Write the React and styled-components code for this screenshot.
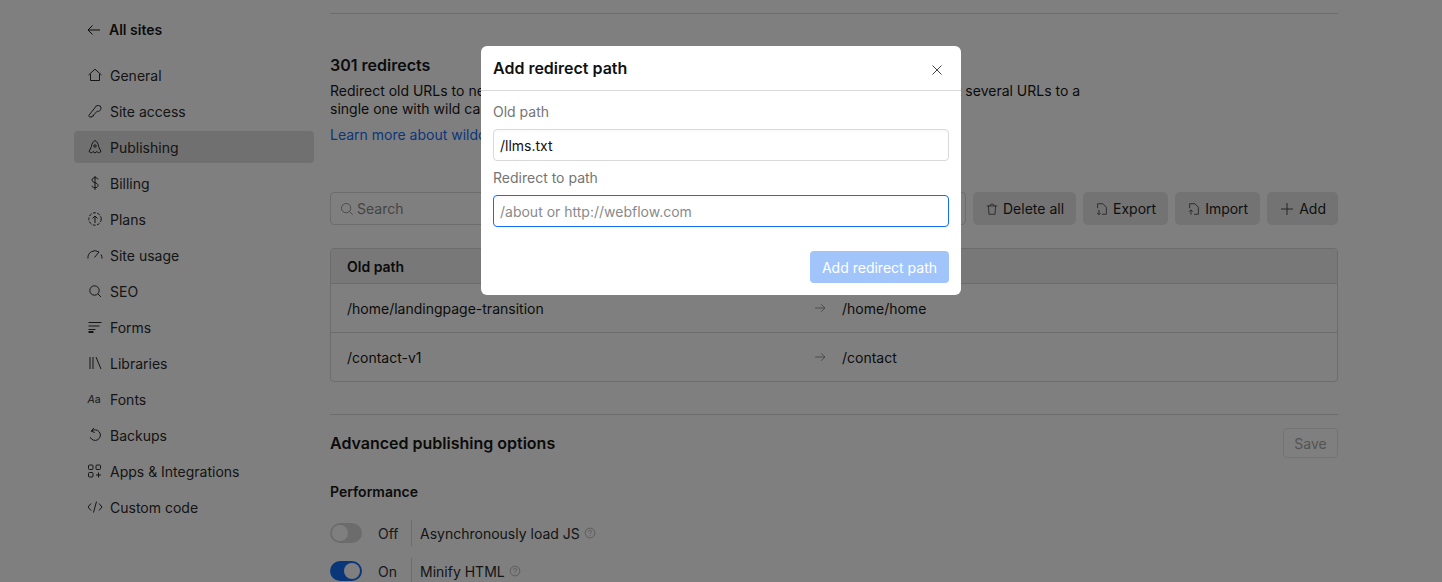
import React from "react";
import styled, { createGlobalStyle } from "styled-components";

const GlobalStyle = createGlobalStyle`
  html, body {
    margin: 0;
    height: 582px;
    overflow: hidden;
    background: #fff;
    color: #171717;
    font-family: Inter, "Liberation Sans", sans-serif;
    font-size: 14px;
  }
`;

const Svg = ({ size = 16, children }) => (
  <svg width={size} height={size} viewBox="0 0 16 16" fill="none" stroke="currentColor" strokeWidth="1" aria-hidden="true">
    {children}
  </svg>
);

const navItems = [
  { label: "General", icon: <path d="M1.5 8 8 2.2 14.5 8M3.5 7v6.5h9V7" /> },
  {
    label: "Site access",
    icon: (
      <>
        <path d="M8 4.2a3 3 0 0 1 3-2.2h.5A2.5 2.5 0 0 1 14 4.5V5a3 3 0 0 1-3.8 2.7L6.5 11.5v1H5v1H3a1.200 1.200 0 0 1-1-1.800z" transform="translate(0 .5)" />
      </>
    ),
  },
  {
    label: "Publishing",
    icon: (
      <>
        <path d="M8 1.500c2 1 3.500 3.500 3.500 6l2.500 5-2.500 1.500L10 12.500 8 14l-2-1.500L4.500 14 2 12.500l2.500-5c0-2.500 1.500-5 3.500-6z" />
        <circle cx="8" cy="7" r="1.200" />
      </>
    ),
  },
  { label: "Billing", icon: <path d="M11 4.500C11 3.200 9.700 2.800 8 2.800S5 3.500 5 5s1.300 2.200 3 2.700 3 1.200 3 2.800-1.300 2.200-3 2.200-3-.6-3-2M8 1v14" /> },
  {
    label: "Plans",
    icon: (
      <>
        <circle cx="8" cy="8" r="6.200" strokeDasharray="3 1.400" />
        <path d="M8 12V5M5.500 7.500 8 5l2.500 2.500" />
      </>
    ),
  },
  { label: "Site usage", icon: <path d="M1 12.500a7 7 0 0 1 11-6.500M14 8.500a7 7 0 0 1 1 4M7.500 11.500 12 6" transform="translate(0 -1)" /> },
  {
    label: "SEO",
    icon: (
      <>
        <circle cx="7.500" cy="7.500" r="4.700" />
        <path d="m11 11 3 3" />
      </>
    ),
  },
  {
    label: "Forms",
    icon: (
      <>
        <path d="M1.500 3.500h13M1.500 7h11" />
        <path d="M1.500 10.500h7" />
        <path d="M1.500 13h5" strokeWidth="2" />
      </>
    ),
  },
  { label: "Libraries", icon: <path d="M3 2v12M6 2v12M9 2l5 12" /> },
  {
    label: "Fonts",
    icon: (
      <text x="0.500" y="12" fontSize="10.500" fontFamily="Inter, sans-serif" fill="currentColor" stroke="none">
        <tspan fontStyle="italic">A</tspan>
        <tspan>a</tspan>
      </text>
    ),
  },
  { label: "Backups", icon: <path d="M4.500 4.200a5.300 5.300 0 1 1-1.300 6M6.800 1 4.300 4.200l3.500 1.300" /> },
  {
    label: "Apps & Integrations",
    icon: (
      <>
        <rect x="1.500" y="2" width="4.500" height="4.500" rx="1" />
        <rect x="9" y="2" width="4.500" height="4.500" rx="1" />
        <rect x="1.500" y="9.500" width="4.500" height="4.500" rx="1" />
        <path d="M11.500 9.500v5M9 12h5" />
      </>
    ),
  },
  { label: "Custom code", icon: <path d="M4 4.500 1 8l3 3.500M12 4.500 15 8l-3 3.500M9.500 2.500l-3 11" /> },
];

const Page = styled.div`
  display: flex;
  gap: 16px;
  padding-left: 74px;
`;

const Sidebar = styled.nav`
  width: 240px;
  flex: none;
  padding-top: 14px;
`;

const BackLink = styled.a`
  display: flex;
  align-items: center;
  gap: 7px;
  height: 32px;
  padding-left: 12px;
  margin-bottom: 13px;
  font-weight: 600;
  line-height: 20px;
`;

const NavList = styled.div`
  display: flex;
  flex-direction: column;
  gap: 4px;
`;

const NavItem = styled.a`
  display: flex;
  align-items: center;
  gap: 7px;
  height: 32px;
  padding-left: 13px;
  border-radius: 4px;
  background: ${(p) => (p.$active ? "#e0e0e0" : "transparent")};
  color: #2b2b2b;
`;

const Main = styled.main`
  width: 1008px;
  flex: none;
`;

const Rule = styled.hr`
  margin: ${(p) => p.$top}px 0 0;
  border: 0;
  border-top: 1px solid #d8d8d8;
`;

const SectionTitle = styled.h2`
  margin: 41px 0 0;
  font-size: 16px;
  font-weight: 600;
  line-height: 20px;
`;

const Description = styled.p`
  margin: 7px 0 0;
  line-height: 18px;
  white-space: nowrap;
`;

const LearnLink = styled.a`
  display: block;
  margin-top: 8px;
  line-height: 18px;
  color: #146ef5;
`;

const Toolbar = styled.div`
  display: flex;
  gap: 7px;
  margin-top: 48px;
  height: 33px;
`;

const SearchBox = styled.div`
  flex: 1;
  display: flex;
  align-items: center;
  gap: 3px;
  padding-left: 9px;
  border: 1px solid #d8d8d8;
  border-radius: 4px;
  color: #8a8a8a;
`;

const ToolButton = styled.button`
  display: flex;
  align-items: center;
  gap: 4px;
  padding: 0 12px;
  border: 0;
  border-radius: 5px;
  background: #e6e6e6;
  color: #1f1f1f;
  font: inherit;
  svg {
    color: #4a4a4a;
  }
`;

const Table = styled.div`
  margin-top: 23px;
  border: 1px solid #d8d8d8;
  border-radius: 4px;
`;

const Row = styled.div`
  display: grid;
  grid-template-columns: 467px 28px 1fr;
  align-items: center;
  height: ${(p) => (p.$head ? 34 : 48)}px;
  padding-left: 16px;
  background: ${(p) => (p.$head ? "#f0f0f0" : "transparent")};
  font-weight: ${(p) => (p.$head ? 600 : 400)};
  border-top: ${(p) => (p.$first ? 0 : "1px solid #d8d8d8")};
  border-radius: ${(p) => (p.$head ? "4px 4px 0 0" : 0)};
`;

const RowArrow = styled.span`
  display: flex;
  color: #757575;
`;

const SectionHead = styled.div`
  display: flex;
  align-items: center;
  justify-content: space-between;
  margin-top: 13px;
  height: 30px;
`;

const SectionHeading = styled.h2`
  margin: 0;
  font-size: 16px;
  font-weight: 600;
`;

const SaveButton = styled.button`
  width: 55px;
  height: 30px;
  border: 1px solid #e6e6e6;
  border-radius: 4px;
  background: transparent;
  color: #a8a8a8;
  font: inherit;
`;

const GroupTitle = styled.h3`
  margin: 24px 0 0;
  font-size: 14px;
  font-weight: 600;
  line-height: 20px;
`;

const OptionList = styled.div`
  display: flex;
  flex-direction: column;
  gap: 12px;
  margin-top: 18px;
`;

const Option = styled.div`
  display: flex;
  align-items: center;
  height: 26px;
`;

const Track = styled.span`
  display: flex;
  justify-content: ${(p) => (p.$on ? "flex-end" : "flex-start")};
  box-sizing: border-box;
  width: 32px;
  height: 20px;
  padding: 2px;
  border-radius: 10px;
  background: ${(p) => (p.$on ? "#146ef5" : "#d9d9d9")};
  &::after {
    content: "";
    width: 16px;
    height: 16px;
    border-radius: 50%;
    background: #fff;
  }
`;

const StateLabel = styled.span`
  width: 33px;
  margin-left: 16px;
  color: #333;
`;

const OptionDivider = styled.span`
  width: 1px;
  height: 26px;
  background: #d8d8d8;
`;

const OptionLabel = styled.span`
  display: flex;
  align-items: center;
  gap: 4px;
  margin-left: 8px;
  color: #2b2b2b;
  svg {
    color: #a3a3a3;
  }
`;

const Overlay = styled.div`
  position: fixed;
  inset: 0;
  display: flex;
  justify-content: center;
  align-items: flex-start;
  padding-top: 46px;
  background: rgba(0, 0, 0, 0.5);
`;

const Modal = styled.div`
  width: 480px;
  background: #fff;
  border-radius: 6px;
`;

const ModalHeader = styled.div`
  display: flex;
  align-items: center;
  justify-content: space-between;
  height: 44px;
  padding: 0 16px 0 12px;
  border-bottom: 1px solid #d9d9d9;
`;

const ModalTitle = styled.h2`
  margin: -1px 0 0;
  font-size: 16px;
  font-weight: 600;
  color: #111;
`;

const CloseButton = styled.button`
  display: flex;
  padding: 0;
  margin-top: 4px;
  border: 0;
  background: none;
  color: #444;
`;

const ModalBody = styled.div`
  padding: 12px 12px;
`;

const FieldLabel = styled.label`
  display: block;
  margin-top: ${(p) => (p.$first ? 0 : 8)}px;
  margin-bottom: 8px;
  line-height: 18px;
  color: #757575;
`;

const TextInput = styled.input`
  display: block;
  box-sizing: border-box;
  width: 100%;
  height: 32px;
  padding: 0 6px;
  border: 1px solid ${(p) => (p.$focus ? "#146ef5" : "#d9d9d9")};
  border-radius: 4px;
  outline: 0;
  font: inherit;
  color: #111;
  box-shadow: inset 0 2px 3px rgba(0, 0, 0, 0.02);
  &::placeholder {
    color: #8a8a8a;
  }
`;

const ModalFooter = styled.div`
  display: flex;
  justify-content: flex-end;
  margin-top: 24px;
`;

const PrimaryButton = styled.button`
  height: 32px;
  padding: 0 12px;
  border: 0;
  border-radius: 4px;
  background: #a1c5fb;
  color: #fff;
  font: inherit;
`;

const HelpIcon = () => (
  <Svg size={12}>
    <circle cx="8" cy="8" r="6.500" />
    <path d="M6 6.300a2 2 0 1 1 2.800 1.800c-.5.3-.8.6-.8 1.300M8 11v1" />
  </Svg>
);

const ArrowRight = () => (
  <Svg size={12}>
    <path d="M1.500 8h13M9.500 3l5 5-5 5" />
  </Svg>
);

const rows = [
  { from: "/home/landingpage-transition", to: "/home/home" },
  { from: "/contact-v1", to: "/contact" },
];

export default function App() {
  return (
    <>
      <GlobalStyle />
      <Page>
        <Sidebar>
          <BackLink>
            <Svg>
              <path d="M14 8H2M6.500 3.500 2 8l4.500 4.500" />
            </Svg>
            All sites
          </BackLink>
          <NavList>
            {navItems.map((item) => (
              <NavItem key={item.label} $active={item.label === "Publishing"}>
                <Svg>{item.icon}</Svg>
                {item.label}
              </NavItem>
            ))}
          </NavList>
        </Sidebar>
        <Main>
          <Rule $top={13} />
          <SectionTitle>301 redirects</SectionTitle>
          <Description>
            Redirect old URLs to new ones so visitors and search engines can still find your pages. Redirect several URLs to a
            <br />
            single one with wild cards.
          </Description>
          <LearnLink>Learn more about wildcard redirects</LearnLink>
          <Toolbar>
            <SearchBox>
              <Svg size={14}>
                <circle cx="7" cy="7" r="5.300" />
                <path d="m11 11 3.500 3.500" />
              </Svg>
              Search
            </SearchBox>
            <ToolButton>
              <Svg size={14}>
                <path d="M2 4.500h12M4 4.500 4.500 14h7l.5-9.500M5.500 4.500c0-3 5-3 5 0" />
              </Svg>
              Delete all
            </ToolButton>
            <ToolButton>
              <Svg size={14}>
                <path d="M3 7V2h6l4 4v8H8M4.500 9v5.500M2.500 12.500l2 2 2-2" />
              </Svg>
              Export
            </ToolButton>
            <ToolButton>
              <Svg size={14}>
                <path d="M3 7V2h6l4 4v8H8M4.500 14.500V9M2.500 11l2-2 2 2" />
              </Svg>
              Import
            </ToolButton>
            <ToolButton>
              <Svg>
                <path d="M8 2v12M2 8h12" />
              </Svg>
              Add
            </ToolButton>
          </Toolbar>
          <Table>
            <Row $head $first>
              <span>Old path</span>
              <span />
              <span>Redirect to path</span>
            </Row>
            {rows.map((row) => (
              <Row key={row.from}>
                <span>{row.from}</span>
                <RowArrow>
                  <ArrowRight />
                </RowArrow>
                <span>{row.to}</span>
              </Row>
            ))}
          </Table>
          <Rule $top={32} />
          <SectionHead>
            <SectionHeading>Advanced publishing options</SectionHeading>
            <SaveButton>Save</SaveButton>
          </SectionHead>
          <GroupTitle>Performance</GroupTitle>
          <OptionList>
            <Option>
              <Track />
              <StateLabel>Off</StateLabel>
              <OptionDivider />
              <OptionLabel>
                Asynchronously load JS <HelpIcon />
              </OptionLabel>
            </Option>
            <Option>
              <Track $on />
              <StateLabel>On</StateLabel>
              <OptionDivider />
              <OptionLabel>
                Minify HTML <HelpIcon />
              </OptionLabel>
            </Option>
          </OptionList>
        </Main>
      </Page>
      <Overlay>
        <Modal>
          <ModalHeader>
            <ModalTitle>Add redirect path</ModalTitle>
            <CloseButton>
              <Svg>
                <path d="m3.500 3.500 9 9M12.500 3.500l-9 9" />
              </Svg>
            </CloseButton>
          </ModalHeader>
          <ModalBody>
            <FieldLabel $first>Old path</FieldLabel>
            <TextInput defaultValue="/llms.txt" />
            <FieldLabel>Redirect to path</FieldLabel>
            <TextInput $focus placeholder="/about or http://webflow.com" />
            <ModalFooter>
              <PrimaryButton>Add redirect path</PrimaryButton>
            </ModalFooter>
          </ModalBody>
        </Modal>
      </Overlay>
    </>
  );
}
